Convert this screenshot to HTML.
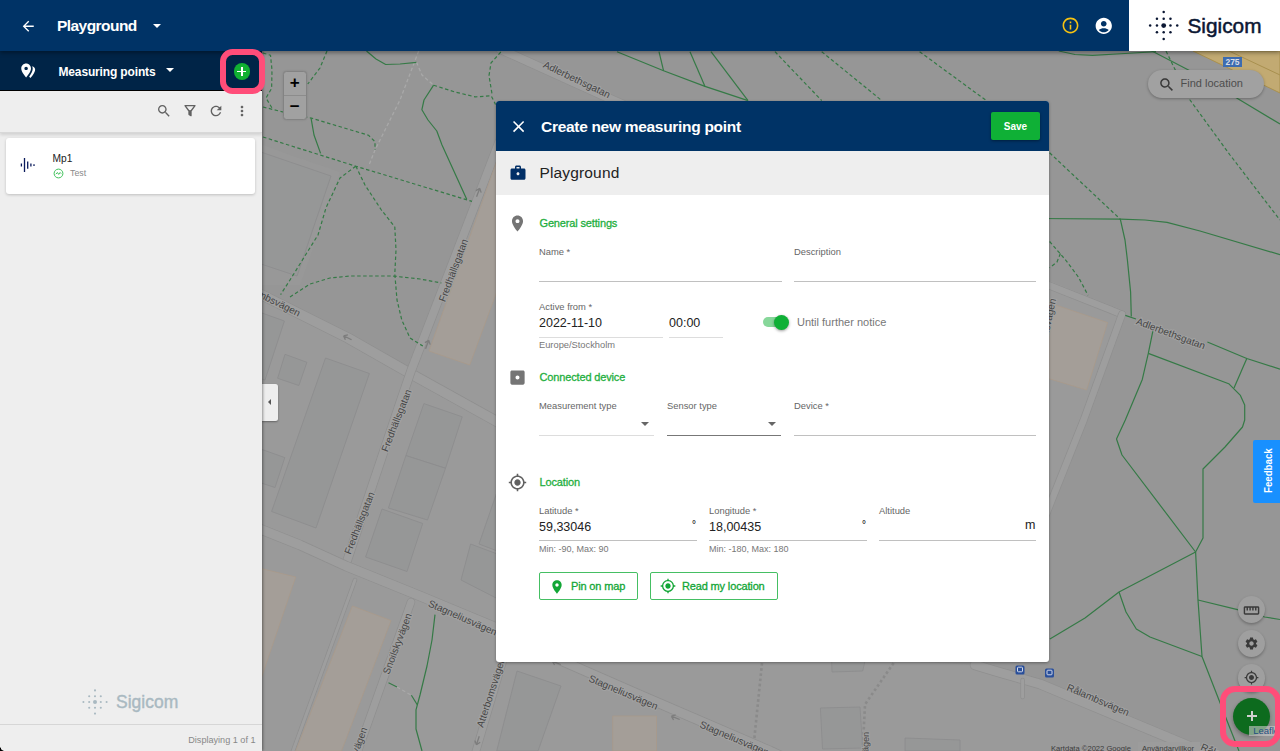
<!DOCTYPE html>
<html lang="en">
<head>
<meta charset="utf-8">
<title>Playground - Create new measuring point</title>
<style>
*{box-sizing:border-box;margin:0;padding:0}
html,body{width:1280px;height:751px;overflow:hidden;background:#999;font-family:"Liberation Sans",sans-serif;color:#222}
.abs{position:absolute}
.wcaret{position:absolute;width:0;height:0;border-left:4px solid transparent;border-right:4px solid transparent;border-top:4.500px solid #fff}
#map{position:absolute;left:0;top:0;width:1280px;height:751px}
#hdr{position:absolute;left:0;top:0;width:1280px;height:51px;background:#003366;box-shadow:0 2px 4px rgba(0,0,0,.35);z-index:5}
#hdr .title{position:absolute;left:57px;top:17.200px;font-size:15.500px;font-weight:bold;color:#fff;letter-spacing:-.55px}
#logo{position:absolute;left:1128.500px;top:0;width:151.500px;height:51px;background:#fff}
#logo .t{position:absolute;left:59px;top:13.500px;font-size:20.800px;color:#0b1733;-webkit-text-stroke:.5px #0b1733}
#side{position:absolute;left:0;top:50px;width:262px;height:701px;background:#eee;z-index:3;box-shadow:1px 0 2.500px rgba(0,0,0,.4)}
#sub{position:absolute;left:0;top:0;width:262px;height:41px;background:#002447;border-bottom:1px solid #000}
#sub .t{position:absolute;left:58.500px;top:15px;font-size:12px;font-weight:bold;color:#fff;letter-spacing:-.15px}
#tb{position:absolute;left:0;top:41px;width:262px;height:41.500px;background:#eee;border-bottom:1px solid #d8d8d8;box-shadow:0 2px 3px rgba(0,0,0,.12)}
#card{position:absolute;left:6px;top:87.500px;width:249px;height:56px;background:#fff;border-radius:3px;box-shadow:0 1px 3px rgba(0,0,0,.2)}
#card .n{position:absolute;left:46.500px;top:15.300px;font-size:10.200px;color:#222}
#card .s{position:absolute;left:64px;top:30.700px;font-size:8.800px;color:#8a8a8a}
#foot{position:absolute;left:0;top:674px;width:262px;height:27px;border-top:1px solid #d6d6d6}
#foot .t{position:absolute;right:6.500px;top:10px;font-size:9.100px;color:#888}
#slogo{position:absolute;left:116px;top:642px;font-size:17.500px;color:#a9b9c1;-webkit-text-stroke:.4px #a9b9c1}
#handle{position:absolute;left:262px;top:383.700px;width:16px;height:37.200px;background:#eee;border-radius:0 2.500px 2.500px 0;z-index:2;box-shadow:0 1px 2px rgba(0,0,0,.35)}
#dlg{position:absolute;left:496px;top:101px;width:553.200px;height:560.800px;background:#fff;border-radius:3px;box-shadow:0 1px 3px rgba(0,0,0,.35);z-index:4;overflow:hidden}
#dh{position:absolute;left:0;top:0;width:553px;height:50px;background:#003366}
#dh .t{position:absolute;left:45px;top:16.800px;letter-spacing:-.3px;font-size:15.500px;font-weight:bold;color:#fff}
#save{position:absolute;left:495.200px;top:10.800px;width:48.500px;height:28.200px;background:#0fb036;border-radius:2px;color:#fff;font-size:10px;font-weight:bold;text-align:center;line-height:29.500px;box-shadow:0 1px 3px rgba(0,0,0,.4)}
#pb{position:absolute;left:0;top:50px;width:553px;height:44px;background:#eee}
#pb .t{position:absolute;left:43.500px;top:12.800px;font-size:15.500px;color:#222;letter-spacing:.15px}
.sec{position:absolute;left:43.500px;font-size:11px;color:#1faf40;letter-spacing:-.15px;-webkit-text-stroke:.3px #1faf40}
.lbl{position:absolute;line-height:10px;font-size:9.400px;color:#666;white-space:nowrap}
.val{position:absolute;font-size:12.5px;color:#222}
.ul{position:absolute;height:1px;background:#c0c0c0}
.hint{position:absolute;font-size:9.300px;line-height:10px;color:#777;white-space:nowrap}
.ul.lt{background:#ddd}.ul.dk{background:#777}
.caret{position:absolute;width:0;height:0;border-left:4px solid transparent;border-right:4px solid transparent;border-top:4px solid #666}
.deg{font-size:10px;color:#444;font-weight:bold}
.btn{position:absolute;height:28px;border:1px solid #45bf63;border-radius:2px;color:#12a636;font-size:11px;line-height:26px;letter-spacing:-.15px;-webkit-text-stroke:.3px #12a636;white-space:nowrap}

#zoomc{position:absolute;left:282.500px;top:71px;width:24.500px;height:48.500px;background:#a1a1a1;border:1.500px solid #838383;border-radius:3.500px;z-index:1;box-shadow:0 0 2px rgba(0,0,0,.15)}
#zoomc .zb{position:absolute;left:0;width:22.500px;height:23px;text-align:center;font-size:17px;font-weight:bold;line-height:22px;color:#000}
#zoomc .zl{position:absolute;left:0;top:23px;width:22.500px;height:1px;background:#8c8c8c}
#find{position:absolute;left:1148px;top:70.300px;width:116px;height:27.400px;border-radius:14px;background:#a1a1a1;box-shadow:0 1px 3px rgba(0,0,0,.3);z-index:1}
#fb{position:absolute;left:1253.200px;top:439.500px;width:26.800px;height:63.300px;background:#1890ff;z-index:1;border-radius:2px 0 0 2px}
#fb span{position:absolute;left:7.500px;top:53.600px;transform-origin:0 0;transform:rotate(-90deg) scaleX(.835);color:#fff;font-size:11.600px;font-weight:bold;white-space:nowrap;line-height:14px}
.rb{position:absolute;left:1237.700px;width:27.400px;height:27.400px;border-radius:50%;background:#9f9f9f;box-shadow:0 1.500px 3px rgba(0,0,0,.28);z-index:1}
#fab{position:absolute;left:1233px;top:697.800px;width:37px;height:37px;border-radius:50%;background:#0d6b1e;box-shadow:0 2px 4px rgba(0,0,0,.3);z-index:1}
#leaf{position:absolute;left:1249.200px;top:725.800px;width:31px;height:10px;background:rgba(200,200,200,.62);z-index:2;overflow:hidden;font-size:9.500px;line-height:10px;color:#1f4f80;padding-left:4px;white-space:nowrap}
.pink{position:absolute;border:6.400px solid #ff4d79}
#addb{position:absolute;left:233.500px;top:63.200px;width:16.600px;height:16.600px;border-radius:50%;background:#10b032;z-index:9}
</style>
</head>
<body>
<div id="map"><!--MAP--><svg id="mapsvg" width="1280" height="751" viewBox="0 0 1280 751" style="position:absolute;left:0;top:0"><rect x="0" y="0" width="1280" height="751" fill="#969696"/>
<polygon points="250.0,288.5 348.0,338.0 411.8,374.3 520.0,434.0 520.0,640.0 975.0,665.0 1040.0,684.0 1230.0,764.0 250.0,764.0" fill="#9a9a9a" stroke="#9a9a9a" stroke-width="0"/>
<polygon points="500.0,140.0 411.8,374.3 520.0,434.0 520.0,140.0" fill="#9a9a9a" stroke="#9a9a9a" stroke-width="0"/>
<polygon points="1035.0,276.0 1049.6,281.0 1123.0,310.0 1126.0,314.0 1047.0,520.0 1035.0,540.0" fill="#9a9a9a" stroke="#9a9a9a" stroke-width="0"/>
<polygon points="250.0,140.0 290.0,155.0 340.0,172.0 300.0,285.0 250.0,285.0" fill="#989898" stroke="#989898" stroke-width="0"/>
<polygon points="1193.0,51.0 1280.0,93.0 1280.0,51.0" fill="#c2aa72" stroke="#a8904f" stroke-width="1"/>
<path d="M1229.0 51.0 L1280.0 75.0" fill="none" stroke="#a8904f" stroke-width="1" stroke-linejoin="round"/>
<rect x="1223" y="57" width="19" height="10" fill="#3d6cb0"/><text x="1232.500" y="65.300" font-size="8.500" font-weight="bold" fill="#d9dde6" text-anchor="middle" font-family="Liberation Sans, sans-serif">275</text>
<path d="M250.0 288.5 L262.0 295.0 L348.0 338.0 L411.8 374.3 L495.6 420.8 L520.0 434.0" fill="none" stroke="#8f8f8f" stroke-width="10.9" stroke-linejoin="round" stroke-linecap="round"/><path d="M250.0 288.5 L262.0 295.0 L348.0 338.0 L411.8 374.3 L495.6 420.8 L520.0 434.0" fill="none" stroke="#9e9e9e" stroke-width="9.5" stroke-linejoin="round" stroke-linecap="round"/>
<path d="M500.0 140.0 L475.0 205.0 L411.0 371.0 L401.0 400.0 L346.0 564.0" fill="none" stroke="#8f8f8f" stroke-width="9.4" stroke-linejoin="round" stroke-linecap="round"/><path d="M500.0 140.0 L475.0 205.0 L411.0 371.0 L401.0 400.0 L346.0 564.0" fill="none" stroke="#9e9e9e" stroke-width="8" stroke-linejoin="round" stroke-linecap="round"/>
<path d="M255.0 527.0 L300.0 545.0 L346.0 566.0 L420.0 596.0 L497.0 628.0 L560.0 660.0 L640.0 695.0 L770.0 751.0 L800.0 765.0" fill="none" stroke="#8f8f8f" stroke-width="10.4" stroke-linejoin="round" stroke-linecap="round"/><path d="M255.0 527.0 L300.0 545.0 L346.0 566.0 L420.0 596.0 L497.0 628.0 L560.0 660.0 L640.0 695.0 L770.0 751.0 L800.0 765.0" fill="none" stroke="#9e9e9e" stroke-width="9" stroke-linejoin="round" stroke-linecap="round"/>
<path d="M411.0 602.0 L358.0 751.0 L355.0 760.0" fill="none" stroke="#8f8f8f" stroke-width="8.4" stroke-linejoin="round" stroke-linecap="round"/><path d="M411.0 602.0 L358.0 751.0 L355.0 760.0" fill="none" stroke="#9e9e9e" stroke-width="7" stroke-linejoin="round" stroke-linecap="round"/>
<path d="M355.0 580.0 L293.0 751.0 L290.0 760.0" fill="none" stroke="#8f8f8f" stroke-width="4.4" stroke-linejoin="round" stroke-linecap="round"/><path d="M355.0 580.0 L293.0 751.0 L290.0 760.0" fill="none" stroke="#9e9e9e" stroke-width="3" stroke-linejoin="round" stroke-linecap="round"/>
<path d="M506.0 650.0 L476.0 751.0 L474.0 760.0" fill="none" stroke="#8f8f8f" stroke-width="8.4" stroke-linejoin="round" stroke-linecap="round"/><path d="M506.0 650.0 L476.0 751.0 L474.0 760.0" fill="none" stroke="#9e9e9e" stroke-width="7" stroke-linejoin="round" stroke-linecap="round"/>
<path d="M500.0 49.0 L615.0 101.0 L640.0 112.0" fill="none" stroke="#8f8f8f" stroke-width="9.4" stroke-linejoin="round" stroke-linecap="round"/><path d="M500.0 49.0 L615.0 101.0 L640.0 112.0" fill="none" stroke="#9e9e9e" stroke-width="8" stroke-linejoin="round" stroke-linecap="round"/>
<path d="M975.0 665.0 L1000.0 672.5 L1040.0 684.0 L1203.0 752.0 L1230.0 764.0" fill="none" stroke="#8f8f8f" stroke-width="10.4" stroke-linejoin="round" stroke-linecap="round"/><path d="M975.0 665.0 L1000.0 672.5 L1040.0 684.0 L1203.0 752.0 L1230.0 764.0" fill="none" stroke="#9e9e9e" stroke-width="9" stroke-linejoin="round" stroke-linecap="round"/>
<path d="M1022.6 680.0 L1022.6 697.0" fill="none" stroke="#8f8f8f" stroke-width="4.4" stroke-linejoin="round" stroke-linecap="round"/><path d="M1022.6 680.0 L1022.6 697.0" fill="none" stroke="#9e9e9e" stroke-width="3" stroke-linejoin="round" stroke-linecap="round"/>
<path d="M1035.0 280.0 L1049.6 285.6 L1110.0 309.5 L1122.0 314.4" fill="none" stroke="#8f8f8f" stroke-width="7.9" stroke-linejoin="round" stroke-linecap="round"/><path d="M1035.0 280.0 L1049.6 285.6 L1110.0 309.5 L1122.0 314.4" fill="none" stroke="#9e9e9e" stroke-width="6.5" stroke-linejoin="round" stroke-linecap="round"/>
<path d="M1122.0 314.4 L1083.7 420.0 L1047.0 512.0 L1038.0 535.0" fill="none" stroke="#8f8f8f" stroke-width="7.9" stroke-linejoin="round" stroke-linecap="round"/><path d="M1122.0 314.4 L1083.7 420.0 L1047.0 512.0 L1038.0 535.0" fill="none" stroke="#9e9e9e" stroke-width="6.5" stroke-linejoin="round" stroke-linecap="round"/>
<polygon points="255.0,150.0 290.0,162.0 331.0,176.0 297.0,276.0 255.0,262.0" fill="#969797" stroke="#8b8c8d" stroke-width="0.8"/>
<polygon points="325.5,358.0 369.4,373.5 316.0,528.0 271.6,511.5" fill="#969797" stroke="#8b8c8d" stroke-width="0.8"/>
<polygon points="255.0,447.0 284.8,457.6 275.0,487.5 255.0,481.0" fill="#969797" stroke="#8b8c8d" stroke-width="0.8"/>
<polygon points="423.9,403.6 462.2,416.8 445.5,468.3 405.9,455.6" fill="#969797" stroke="#8b8c8d" stroke-width="0.8"/>
<polygon points="405.9,455.6 445.5,468.3 427.5,520.0 388.4,508.0" fill="#969797" stroke="#8b8c8d" stroke-width="0.8"/>
<polygon points="382.0,509.0 422.7,523.5 407.0,571.5 365.6,557.0" fill="#969797" stroke="#8b8c8d" stroke-width="0.8"/>
<polygon points="497.0,492.0 479.0,544.0 500.0,552.0 500.0,492.0" fill="#969797" stroke="#8b8c8d" stroke-width="0.8"/>
<polygon points="470.6,544.0 500.0,555.0 500.0,600.0 461.0,580.0" fill="#969797" stroke="#8b8c8d" stroke-width="0.8"/>
<polygon points="517.0,671.0 561.0,686.0 538.0,751.0 496.7,751.0" fill="#969797" stroke="#8b8c8d" stroke-width="0.8"/>
<polygon points="831.7,661.0 865.0,661.0 862.7,671.0 832.0,672.0" fill="#969797" stroke="#8b8c8d" stroke-width="0.8"/>
<polygon points="820.4,708.0 860.0,707.0 862.7,748.0 822.5,749.0" fill="#969797" stroke="#8b8c8d" stroke-width="0.8"/>
<polygon points="285.0,354.3 306.9,362.3 298.9,385.5 277.6,378.3" fill="#969797" stroke="#8b8c8d" stroke-width="0.8"/>
<polygon points="255.0,310.5 284.4,321.0 265.0,380.0 255.0,377.0" fill="#969797" stroke="#8b8c8d" stroke-width="0.8"/>
<polygon points="905.0,738.0 960.0,740.0 960.0,751.0 905.0,751.0" fill="#969797" stroke="#8b8c8d" stroke-width="0.8"/>
<polygon points="255.0,567.0 295.7,577.0 262.0,676.0 255.0,690.0" fill="#a49e98" stroke="#ab9a88" stroke-width="0.7"/>
<polygon points="352.4,606.0 391.0,620.6 341.5,751.0 295.7,751.0" fill="#a49e98" stroke="#ab9a88" stroke-width="0.7"/>
<polygon points="612.7,716.0 656.5,716.0 656.5,751.0 612.7,751.0" fill="#a49e98" stroke="#ab9a88" stroke-width="0.7"/>
<polygon points="500.0,152.0 429.0,351.0 469.7,365.0 500.0,283.0" fill="#a49e98" stroke="#ab9a88" stroke-width="0.7"/>
<polygon points="1058.6,306.0 1107.6,322.6 1086.6,390.0 1040.0,376.0 1040.0,300.0" fill="#a49e98" stroke="#ab9a88" stroke-width="0.7"/>
<path d="M762.0 663.0 L754.4 738.0" fill="none" stroke="#8a8a8a" stroke-width="2.6" stroke-dasharray="2.6 2.6" stroke-linejoin="round" stroke-linecap="butt"/>
<path d="M893.6 663.0 L865.0 704.4 L862.7 751.0" fill="none" stroke="#8a8a8a" stroke-width="2.6" stroke-dasharray="2.6 2.6" stroke-linejoin="round" stroke-linecap="butt"/>
<path d="M263.0 53.0 L270.5 55.3 L272.0 70.0 L271.6 88.4 L266.0 98.0 L272.0 108.0" fill="none" stroke="#357a46" stroke-width="1.2" stroke-dasharray="3.5 2.5" stroke-linejoin="round"/>
<path d="M327.0 51.0 L320.0 68.0 L307.8 84.0" fill="none" stroke="#357a46" stroke-width="1.2" stroke-dasharray="3.5 2.5" stroke-linejoin="round"/>
<path d="M263.0 107.0 L283.0 112.0 L311.0 118.0 L368.6 135.3 L375.0 141.7 L375.0 150.0" fill="none" stroke="#357a46" stroke-width="1.2" stroke-dasharray="3.5 2.5" stroke-linejoin="round"/>
<path d="M418.7 51.0 L400.0 100.0 L375.0 150.0 L368.6 166.2" fill="none" stroke="#a9a9a9" stroke-width="1.3" stroke-dasharray="3.5 2.5" stroke-linejoin="round"/>
<path d="M263.0 137.0 L355.8 166.2 L472.0 201.4" fill="none" stroke="#357a46" stroke-width="1.2" stroke-dasharray="3.5 2.5" stroke-linejoin="round"/>
<path d="M311.0 117.8 L314.0 135.0 L320.6 153.4" fill="none" stroke="#357a46" stroke-width="1.2" stroke-linejoin="round"/>
<path d="M366.5 51.0 L376.0 59.0 L385.7 64.5 L400.0 64.0 L416.6 62.4" fill="none" stroke="#357a46" stroke-width="1.2" stroke-linejoin="round"/>
<path d="M416.6 62.4 L422.0 75.0 L433.6 85.2" fill="none" stroke="#a9a9a9" stroke-width="1.3" stroke-dasharray="3.5 2.5" stroke-linejoin="round"/>
<path d="M433.6 85.2 L455.0 92.0 L475.2 96.9 L491.2 95.8 L495.5 104.4" fill="none" stroke="#357a46" stroke-width="1.2" stroke-dasharray="3.5 2.5" stroke-linejoin="round"/>
<path d="M433.6 85.2 L424.0 100.0 L421.9 109.7 L428.0 120.0 L436.8 131.0 L442.0 145.0 L466.7 199.3" fill="none" stroke="#357a46" stroke-width="1.2" stroke-linejoin="round"/>
<path d="M500.8 52.0 L491.0 63.0 L489.0 75.6 L492.3 95.8" fill="none" stroke="#357a46" stroke-width="1.2" stroke-dasharray="3.5 2.5" stroke-linejoin="round"/>
<path d="M355.8 166.2 L340.0 178.0 L326.0 207.8 L318.0 235.0 L308.6 250.0 L290.0 280.0 L280.6 294.6" fill="none" stroke="#357a46" stroke-width="1.2" stroke-dasharray="3.5 2.5" stroke-linejoin="round"/>
<path d="M355.8 166.2 L365.0 185.0 L381.4 210.0 L394.8 227.0 L396.0 250.0 L394.8 273.7 L397.0 300.0 L401.8 320.0 L410.0 338.0 L422.8 346.0" fill="none" stroke="#357a46" stroke-width="1.2" stroke-dasharray="3.5 2.5" stroke-linejoin="round"/>
<path d="M290.0 297.0 L310.0 284.0 L330.0 278.0 L350.5 276.0 L392.5 276.0 L420.0 279.0 L441.4 283.0" fill="none" stroke="#357a46" stroke-width="1.2" stroke-dasharray="3.5 2.5" stroke-linejoin="round"/>
<path d="M435.0 614.6 L432.0 640.0 L427.0 666.0 L420.0 695.0 L416.0 709.8 L416.0 729.0 L422.0 751.0" fill="none" stroke="#357a46" stroke-width="1.2" stroke-linejoin="round"/>
<path d="M388.5 682.8 L397.0 687.0" fill="none" stroke="#357a46" stroke-width="1.2" stroke-linejoin="round"/>
<path d="M397.0 687.0 L411.4 695.3" fill="none" stroke="#a9a9a9" stroke-width="1.3" stroke-dasharray="3.5 2.5" stroke-linejoin="round"/>
<path d="M411.4 695.3 L417.4 705.0" fill="none" stroke="#357a46" stroke-width="1.2" stroke-linejoin="round"/>
<path d="M617.0 51.7 L663.6 70.8 L705.0 86.4 L748.0 100.6" fill="none" stroke="#357a46" stroke-width="1.2" stroke-linejoin="round"/>
<path d="M659.0 51.7 L663.6 70.8" fill="none" stroke="#357a46" stroke-width="1.2" stroke-linejoin="round"/>
<path d="M690.0 51.7 L705.0 86.4" fill="none" stroke="#357a46" stroke-width="1.2" stroke-linejoin="round"/>
<path d="M711.0 51.7 L748.0 100.6" fill="none" stroke="#357a46" stroke-width="1.2" stroke-linejoin="round"/>
<path d="M775.0 51.7 L821.7 100.6" fill="none" stroke="#357a46" stroke-width="1.2" stroke-dasharray="3.5 2.5" stroke-linejoin="round"/>
<path d="M821.7 51.7 L881.8 100.6" fill="none" stroke="#357a46" stroke-width="1.2" stroke-dasharray="3.5 2.5" stroke-linejoin="round"/>
<path d="M919.6 51.7 L986.4 100.6" fill="none" stroke="#357a46" stroke-width="1.2" stroke-dasharray="3.5 2.5" stroke-linejoin="round"/>
<path d="M1049.6 152.8 L1120.3 219.2" fill="none" stroke="#357a46" stroke-width="1.2" stroke-dasharray="3.5 2.5" stroke-linejoin="round"/>
<path d="M1040.0 218.5 L1120.3 219.2 L1145.0 220.0 L1167.0 222.3 L1200.0 231.0 L1280.0 254.7" fill="none" stroke="#357a46" stroke-width="1.2" stroke-linejoin="round"/>
<path d="M1120.3 219.2 L1125.0 240.0 L1127.4 260.0 L1130.6 292.0 L1131.3 316.5" fill="none" stroke="#357a46" stroke-width="1.2" stroke-linejoin="round"/>
<path d="M1166.0 51.0 L1190.0 100.0 L1230.0 155.0 L1280.0 220.0" fill="none" stroke="#357a46" stroke-width="1.2" stroke-dasharray="3.5 2.5" stroke-linejoin="round"/>
<path d="M1058.8 51.0 L1075.0 54.5 L1092.5 55.3 L1125.0 53.5 L1156.0 51.6" fill="none" stroke="#357a46" stroke-width="1.2" stroke-linejoin="round"/>
<path d="M1150.0 50.0 L1200.0 76.0 L1240.0 100.0 L1280.0 124.0" fill="none" stroke="#357a46" stroke-width="1.2" stroke-linejoin="round"/>
<path d="M1049.6 241.5 L1065.6 260.0 L1078.4 277.0 L1088.0 295.2" fill="none" stroke="#357a46" stroke-width="1.2" stroke-dasharray="3.5 2.5" stroke-linejoin="round"/>
<path d="M1060.4 253.5 L1057.0 262.0 L1049.6 267.8" fill="none" stroke="#357a46" stroke-width="1.2" stroke-dasharray="3.5 2.5" stroke-linejoin="round"/>
<path d="M1207.4 342.0 L1246.8 358.5 L1280.0 369.2" fill="none" stroke="#357a46" stroke-width="1.2" stroke-linejoin="round"/>
<path d="M1125.3 315.4 L1136.0 319.0" fill="none" stroke="#357a46" stroke-width="1.2" stroke-linejoin="round"/>
<path d="M1153.0 330.4 L1148.3 353.4 L1142.3 379.4 L1125.3 420.1 L1116.5 439.0 L1122.0 455.0 L1195.6 552.0" fill="none" stroke="#357a46" stroke-width="1.2" stroke-linejoin="round"/>
<path d="M1148.3 353.4 L1228.7 383.7 L1240.4 395.4 L1244.7 405.0 L1244.7 420.0 L1242.5 427.0 L1225.0 447.0 L1203.0 469.0 L1203.0 538.0 L1195.6 552.0" fill="none" stroke="#357a46" stroke-width="1.2" stroke-linejoin="round"/>
<path d="M1246.8 358.5 L1234.0 388.0" fill="none" stroke="#357a46" stroke-width="1.2" stroke-linejoin="round"/>
<path d="M1195.6 552.0 L1198.0 600.0 L1202.0 656.5" fill="none" stroke="#357a46" stroke-width="1.2" stroke-linejoin="round"/>
<path d="M1195.6 552.0 L1119.0 592.0 L1085.0 618.0 L1049.9 639.0" fill="none" stroke="#357a46" stroke-width="1.2" stroke-linejoin="round"/>
<path d="M1119.0 592.0 L1126.0 612.0 L1136.3 629.0 L1150.0 637.0 L1202.0 656.5" fill="none" stroke="#357a46" stroke-width="1.2" stroke-linejoin="round"/>
<path d="M1198.0 600.0 L1237.5 609.6 L1264.7 617.0 L1280.0 619.5" fill="none" stroke="#357a46" stroke-width="1.2" stroke-linejoin="round"/>
<path d="M1202.0 656.5 L1229.0 725.7 L1239.0 751.0" fill="none" stroke="#357a46" stroke-width="1.2" stroke-linejoin="round"/>
<text x="542.5" y="67" transform="rotate(25.5 542.5 67)" font-size="10" fill="#454545" font-family="Liberation Sans, sans-serif" stroke="#a2a2a2" stroke-width="2" paint-order="stroke" style="paint-order:stroke">Adlerbethsgatan</text>
<text x="1135.5" y="324" transform="rotate(20.5 1135.5 324)" font-size="10" fill="#454545" font-family="Liberation Sans, sans-serif" stroke="#a2a2a2" stroke-width="2" paint-order="stroke" style="paint-order:stroke">Adlerbethsgatan</text>
<text x="445" y="302.5" transform="rotate(-69.5 445 302.5)" font-size="10" fill="#454545" font-family="Liberation Sans, sans-serif" stroke="#a2a2a2" stroke-width="2" paint-order="stroke" style="paint-order:stroke">Fredhällsgatan</text>
<text x="387.5" y="452.5" transform="rotate(-68.5 387.5 452.5)" font-size="10" fill="#454545" font-family="Liberation Sans, sans-serif" stroke="#a2a2a2" stroke-width="2" paint-order="stroke" style="paint-order:stroke">Fredhällsgatan</text>
<text x="350.5" y="555" transform="rotate(-68.5 350.5 555)" font-size="10" fill="#454545" font-family="Liberation Sans, sans-serif" stroke="#a2a2a2" stroke-width="2" paint-order="stroke" style="paint-order:stroke">Fredhällsgatan</text>
<text x="238.5" y="287" transform="rotate(26.5 238.5 287)" font-size="10" fill="#454545" font-family="Liberation Sans, sans-serif" stroke="#a2a2a2" stroke-width="2" paint-order="stroke" style="paint-order:stroke">Rålambsvägen</text>
<text x="427.5" y="606" transform="rotate(23.7 427.5 606)" font-size="10" fill="#454545" font-family="Liberation Sans, sans-serif" stroke="#a2a2a2" stroke-width="2" paint-order="stroke" style="paint-order:stroke">Stagneliusvägen</text>
<text x="588" y="681" transform="rotate(23 588 681)" font-size="10" fill="#454545" font-family="Liberation Sans, sans-serif" stroke="#a2a2a2" stroke-width="2" paint-order="stroke" style="paint-order:stroke">Stagneliusvägen</text>
<text x="699" y="727" transform="rotate(23 699 727)" font-size="10" fill="#454545" font-family="Liberation Sans, sans-serif" stroke="#a2a2a2" stroke-width="2" paint-order="stroke" style="paint-order:stroke">Stagneliusvägen</text>
<text x="389" y="675" transform="rotate(-69 389 675)" font-size="10" fill="#454545" font-family="Liberation Sans, sans-serif" stroke="#a2a2a2" stroke-width="2" paint-order="stroke" style="paint-order:stroke">Snoilskyvägen</text>
<text x="344.5" y="789" transform="rotate(-69 344.5 789)" font-size="10" fill="#454545" font-family="Liberation Sans, sans-serif" stroke="#a2a2a2" stroke-width="2" paint-order="stroke" style="paint-order:stroke">Snoilskyvägen</text>
<text x="483" y="728" transform="rotate(-72 483 728)" font-size="10" fill="#454545" font-family="Liberation Sans, sans-serif" stroke="#a2a2a2" stroke-width="2" paint-order="stroke" style="paint-order:stroke">Atterbomsvägen</text>
<text x="1066" y="690" transform="rotate(23 1066 690)" font-size="10" fill="#454545" font-family="Liberation Sans, sans-serif" stroke="#a2a2a2" stroke-width="2" paint-order="stroke" style="paint-order:stroke">Rålambsvägen</text>
<text x="1200" y="749.5" transform="rotate(23 1200 749.5)" font-size="10" fill="#454545" font-family="Liberation Sans, sans-serif" stroke="#a2a2a2" stroke-width="2" paint-order="stroke" style="paint-order:stroke">Rålambsvägen</text>
<text x="1041" y="370.5" transform="rotate(-78 1041 370.5)" font-size="10" fill="#454545" font-family="Liberation Sans, sans-serif" stroke="#a2a2a2" stroke-width="2" paint-order="stroke" style="paint-order:stroke">Atterbomsvägen</text>
<text x="867" y="790" transform="rotate(-88 867 790)" font-size="9" fill="#454545" font-family="Liberation Sans, sans-serif" stroke="#a2a2a2" stroke-width="2" paint-order="stroke" style="paint-order:stroke">Snoilskyvägen</text>
<path transform="translate(348 338) rotate(26.5)" d="M-5 0H4M-5 0l3.500 -2.800M-5 0l3.500 2.800" stroke="#7d7d7d" stroke-width="1.300" fill="none"/>
<path transform="translate(478 193) rotate(111)" d="M-5 0H4M-5 0l3.500 -2.800M-5 0l3.500 2.800" stroke="#7d7d7d" stroke-width="1.300" fill="none"/>
<path transform="translate(427 345) rotate(111)" d="M-5 0H4M-5 0l3.500 -2.800M-5 0l3.500 2.800" stroke="#7d7d7d" stroke-width="1.300" fill="none"/>
<path transform="translate(478 740) rotate(-72)" d="M-5 0H4M-5 0l3.500 -2.800M-5 0l3.500 2.800" stroke="#7d7d7d" stroke-width="1.300" fill="none"/>
<path transform="translate(557 663) rotate(22)" d="M-5 0H4M-5 0l3.500 -2.800M-5 0l3.500 2.800" stroke="#7d7d7d" stroke-width="1.300" fill="none"/>
<path transform="translate(676 718) rotate(22)" d="M-5 0H4M-5 0l3.500 -2.800M-5 0l3.500 2.800" stroke="#7d7d7d" stroke-width="1.300" fill="none"/>
<rect x="1015.5" y="665.5" width="9" height="9" rx="1.500" fill="#2a4f9a"/><rect x="1017.5" y="667.2" width="5" height="4.600" rx=".8" fill="none" stroke="#cfd6e6" stroke-width="1"/>
<rect x="1045.0" y="668.5" width="9" height="9" rx="1.500" fill="#2a4f9a"/><rect x="1047.0" y="670.2" width="5" height="4.600" rx=".8" fill="none" stroke="#cfd6e6" stroke-width="1"/>
<text x="1051" y="750.500" font-size="7.600" fill="#3c3c3c" font-family="Liberation Sans, sans-serif">Kartdata ©2022 Google</text>
<rect x="1138" y="742" width="62" height="9" fill="#9c9c9c"/><text x="1142" y="750.500" font-size="7.600" fill="#3c3c3c" font-family="Liberation Sans, sans-serif">Användarvillkor</text></svg><!--/MAP--></div>
<div id="hdr">
  <svg class="abs" style="left:20.250px;top:18.350px" width="16.500" height="16.500" viewBox="0 0 24 24"><path fill="#fff" d="M20 11H7.830l5.590-5.590L12 4l-8 8 8 8 1.410-1.410L7.830 13H20v-2z"/></svg>
  <div class="title" id="t_title">Playground</div>
  <div class="wcaret" style="left:152.500px;top:24px"></div>
  <svg class="abs" style="left:1060.500px;top:16px" width="19" height="19" viewBox="0 0 24 24"><path fill="#f5c211" d="M11 7h2v2h-2zm0 4h2v6h-2zm1-9C6.480 2 2 6.480 2 12s4.480 10 10 10 10-4.480 10-10S17.520 2 12 2zm0 18c-4.410 0-8-3.590-8-8s3.590-8 8-8 8 3.590 8 8-3.590 8-8 8z"/></svg>
  <svg class="abs" style="left:1094px;top:16px" width="19.500" height="19.500" viewBox="0 0 24 24"><path fill="#fff" d="M12 2C6.480 2 2 6.480 2 12s4.480 10 10 10 10-4.480 10-10S17.520 2 12 2zm0 4c1.930 0 3.500 1.570 3.500 3.500S13.930 13 12 13s-3.500-1.570-3.500-3.500S10.070 6 12 6zm0 14c-2.030 0-4.430-.82-6.140-2.880C7.550 15.800 9.680 15 12 15s4.450.8 6.140 2.120C16.430 19.180 14.030 20 12 20z"/></svg>
  <div id="logo"><svg class="abs" style="left:0;top:0" width="151" height="50"><circle cx="34.70" cy="12.08" r="1.25" fill="#0b1733"/><circle cx="27.94" cy="18.84" r="1.25" fill="#0b1733"/><circle cx="34.70" cy="18.84" r="1.25" fill="#0b1733"/><circle cx="41.46" cy="18.84" r="1.25" fill="#0b1733"/><circle cx="21.18" cy="25.60" r="1.25" fill="#0b1733"/><circle cx="27.94" cy="25.60" r="1.25" fill="#0b1733"/><circle cx="41.46" cy="25.60" r="1.25" fill="#0b1733"/><circle cx="48.22" cy="25.60" r="1.25" fill="#0b1733"/><circle cx="27.94" cy="32.36" r="1.25" fill="#0b1733"/><circle cx="34.70" cy="32.36" r="1.25" fill="#0b1733"/><circle cx="41.46" cy="32.36" r="1.25" fill="#0b1733"/><circle cx="34.70" cy="39.12" r="1.25" fill="#0b1733"/><circle cx="34.7" cy="25.6" r="2.4" fill="#0b1733"/></svg><div class="t" id="t_logo">Sigicom</div></div>
</div>
<div id="side">
  <div id="sub">
    <svg class="abs" style="left:19px;top:12px" width="18" height="18" viewBox="0 0 24 24"><path fill="#fff" d="M9.500 2C5.910 2 3 4.910 3 8.500 3 13.380 9.500 20.500 9.500 20.500S16 13.380 16 8.500C16 4.910 13.090 2 9.500 2zm0 8.800c-1.270 0-2.300-1.030-2.300-2.300s1.030-2.300 2.300-2.300 2.300 1.030 2.300 2.300-1.030 2.300-2.300 2.300z"/><path fill="#fff" d="M17.500 5.600c.5 1 .8 2.100.8 3.300 0 3.400-2.500 7.600-4.800 10.600l1.900 1.700s6.100-6.300 6.100-11.200c0-2-1.600-3.800-4-4.400z"/></svg>
    <div class="t" id="t_mp">Measuring points</div>
    <div class="wcaret" style="left:166px;top:18px"></div>
    <div class="abs" style="left:240px;top:20px;width:1px;height:1px"></div>
  </div>
  <div id="tb">
    <svg class="abs" style="left:155.500px;top:11.500px" width="16" height="16" viewBox="0 0 24 24"><path fill="#616161" d="M15.500 14h-.79l-.28-.27C15.410 12.590 16 11.110 16 9.500 16 5.910 13.090 3 9.500 3S3 5.910 3 9.500 5.910 16 9.500 16c1.610 0 3.090-.59 4.230-1.570l.27.28v.79l5 4.990L20.490 19l-4.990-5zm-6 0C7.010 14 5 11.990 5 9.500S7.010 5 9.500 5 14 7.010 14 9.500 11.990 14 9.500 14z"/></svg>
    <svg class="abs" style="left:182px;top:12px" width="16" height="16" viewBox="0 0 24 24"><path fill="none" stroke="#616161" stroke-width="2" stroke-linejoin="round" d="M4.500 4h15l-6 8v7l-3-2v-5z"/><path fill="#616161" d="M10.500 11h3v8l-3-2z"/></svg>
    <svg class="abs" style="left:207.500px;top:11.500px" width="16" height="16" viewBox="0 0 24 24"><path fill="#616161" d="M17.650 6.350C16.200 4.900 14.210 4 12 4c-4.420 0-7.990 3.580-7.990 8s3.570 8 7.990 8c3.730 0 6.840-2.550 7.730-6h-2.080c-.82 2.330-3.040 4-5.650 4-3.310 0-6-2.690-6-6s2.690-6 6-6c1.660 0 3.140.69 4.220 1.780L13 11h7V4l-2.350 2.350z"/></svg>
    <svg class="abs" style="left:233.500px;top:12px" width="16" height="16" viewBox="0 0 24 24"><path fill="#616161" d="M12 8c1.100 0 2-.9 2-2s-.9-2-2-2-2 .9-2 2 .9 2 2 2zm0 2c-1.100 0-2 .9-2 2s.9 2 2 2 2-.9 2-2-.9-2-2-2zm0 6c-1.100 0-2 .9-2 2s.9 2 2 2 2-.9 2-2-.9-2-2-2z"/></svg>
  </div>
  <div id="card">
    <svg class="abs" style="left:12px;top:18px" width="20" height="18" viewBox="0 0 20 18"><g stroke="#0a1a5c" stroke-width="1.300" fill="none"><path d="M3.400 7.500v3M6.500 2v14M9.700 5.500v7.200M12.900 7.600v3M16 8.200v1.800"/></g></svg>
    <div class="n" id="t_mp1">Mp1</div>
    <svg class="abs" style="left:46.500px;top:30.500px" width="11" height="11" viewBox="0 0 11 11"><circle cx="5.500" cy="5.500" r="4.400" fill="none" stroke="#3fc25a" stroke-width="1"/><path d="M2.800 6.200l1.600-1.700 1.300 1.900 1.400-1.900 1.100 1.200" fill="none" stroke="#3fc25a" stroke-width="1"/></svg>
    <div class="s" id="t_test">Test</div></div>
  <svg class="abs" style="left:75px;top:632px" width="40" height="40"><circle cx="20.00" cy="8.40" r="1.05" fill="#a9b9c1"/><circle cx="14.20" cy="14.20" r="1.05" fill="#a9b9c1"/><circle cx="20.00" cy="14.20" r="1.05" fill="#a9b9c1"/><circle cx="25.80" cy="14.20" r="1.05" fill="#a9b9c1"/><circle cx="8.40" cy="20.00" r="1.05" fill="#a9b9c1"/><circle cx="14.20" cy="20.00" r="1.05" fill="#a9b9c1"/><circle cx="25.80" cy="20.00" r="1.05" fill="#a9b9c1"/><circle cx="31.60" cy="20.00" r="1.05" fill="#a9b9c1"/><circle cx="14.20" cy="25.80" r="1.05" fill="#a9b9c1"/><circle cx="20.00" cy="25.80" r="1.05" fill="#a9b9c1"/><circle cx="25.80" cy="25.80" r="1.05" fill="#a9b9c1"/><circle cx="20.00" cy="31.60" r="1.05" fill="#a9b9c1"/><circle cx="20" cy="20" r="2.0" fill="#a9b9c1"/></svg>
  <div id="slogo"><span id="t_slogo">Sigicom</span></div>
  <div id="foot"><div class="t" id="t_disp">Displaying 1 of 1</div></div>
</div>
<div id="handle"><div class="abs" style="left:5.800px;top:15.800px;width:0;height:0;border-top:3px solid transparent;border-bottom:3px solid transparent;border-right:3.800px solid #555"></div></div>
<!--OV-->
<div id="zoomc"><div class="zb" style="top:0">+</div><div class="zl"></div><div class="zb" style="top:24px">−</div></div>
<div id="find"><svg class="abs" style="left:9.500px;top:5.500px" width="17.500" height="17.500" viewBox="0 0 24 24"><path fill="#3a3a3a" d="M15.500 14h-.79l-.28-.27C15.410 12.590 16 11.110 16 9.500 16 5.910 13.090 3 9.500 3S3 5.910 3 9.500 5.910 16 9.500 16c1.610 0 3.090-.59 4.230-1.570l.27.28v.79l5 4.990L20.490 19l-4.990-5zm-6 0C7.010 14 5 11.990 5 9.500S7.010 5 9.500 5 14 7.010 14 9.500 11.990 14 9.500 14z"/></svg><span class="abs" style="left:32.500px;top:7px;font-size:11px;color:#4d4d4d;white-space:nowrap" id="t_find">Find location</span></div>
<div id="fb"><span id="t_fb">Feedback</span></div>
<div class="rb" style="top:595.900px"><svg class="abs" style="left:5.200px;top:6px" width="17" height="17" viewBox="0 0 24 24"><path fill="#3a3a3a" d="M21 6H3c-1.100 0-2 .9-2 2v8c0 1.100.9 2 2 2h18c1.100 0 2-.9 2-2V8c0-1.100-.9-2-2-2zm0 10H3V8h2v4h2V8h2v4h2V8h2v4h2V8h2v4h2V8h2v8z"/></svg></div>
<div class="rb" style="top:629.900px"><svg class="abs" style="left:6.200px;top:6.200px" width="15" height="15" viewBox="0 0 24 24"><path fill="#3a3a3a" d="M19.140 12.940c.04-.3.060-.61.060-.94 0-.32-.02-.64-.07-.94l2.030-1.580c.18-.14.230-.41.120-.61l-1.920-3.320c-.12-.22-.37-.29-.59-.22l-2.390.96c-.5-.38-1.030-.7-1.620-.94l-.36-2.540c-.04-.24-.24-.41-.48-.41h-3.840c-.24 0-.43.170-.47.410l-.36 2.540c-.59.240-1.130.57-1.620.94l-2.390-.96c-.22-.08-.47 0-.59.220L2.740 8.870c-.12.210-.08.470.12.610l2.030 1.580c-.05.300-.09.630-.09.940s.02.640.07.940l-2.030 1.580c-.18.140-.23.410-.12.610l1.920 3.320c.12.220.37.290.59.220l2.390-.96c.5.380 1.030.7 1.620.94l.36 2.540c.05.240.24.410.48.410h3.840c.24 0 .44-.17.470-.41l.36-2.540c.59-.24 1.130-.56 1.620-.94l2.390.96c.22.080.47 0 .59-.22l1.920-3.320c.12-.22.070-.47-.12-.61l-2.010-1.580zM12 15.600c-1.980 0-3.600-1.620-3.600-3.600s1.620-3.600 3.600-3.600 3.600 1.620 3.600 3.600-1.620 3.600-3.600 3.600z"/></svg></div>
<div class="rb" style="top:664.200px"><svg class="abs" style="left:6.200px;top:6.200px" width="15" height="15" viewBox="0 0 24 24"><path fill="#3a3a3a" d="M12 8c-2.210 0-4 1.790-4 4s1.790 4 4 4 4-1.790 4-4-1.790-4-4-4zm8.940 3c-.46-4.170-3.770-7.480-7.940-7.940V1h-2v2.060C6.830 3.520 3.520 6.830 3.060 11H1v2h2.060c.46 4.170 3.770 7.480 7.940 7.940V23h2v-2.060c4.170-.46 7.480-3.770 7.940-7.940H23v-2h-2.060zM12 19c-3.870 0-7-3.130-7-7s3.130-7 7-7 7 3.130 7 7-3.130 7-7 7z"/></svg></div>
<div id="fab"><div class="abs" style="left:13.500px;top:17.500px;width:10px;height:2px;background:#cfcfcf"></div><div class="abs" style="left:17.500px;top:13.500px;width:2px;height:10px;background:#cfcfcf"></div></div>
<div id="leaf"><span id="t_leaf">Leaflet</span></div>
<div class="pink" style="left:1219.700px;top:685.900px;width:61px;height:61.200px;border-radius:15px;z-index:9"></div>
<div class="pink" style="left:220.300px;top:48.800px;width:45.200px;height:45.200px;border-radius:12.500px;z-index:9"></div>
<div id="addb"><div class="abs" style="left:3.800px;top:7.500px;width:9px;height:1.600px;background:#fff"></div><div class="abs" style="left:7.500px;top:3.800px;width:1.600px;height:9px;background:#fff"></div></div>
<div class="abs" style="left:0;top:746px;width:4px;height:5px;z-index:20;background:radial-gradient(ellipse 4px 5px at 100% 0,rgba(0,0,0,0) 88%,#000 100%)"></div>
<!--/OV-->
<div id="dlg">
  <div id="dh">
    <svg class="abs" style="left:12.800px;top:15.700px" width="19.200" height="19.200" viewBox="0 0 24 24"><path fill="#fff" d="M19 6.41L17.59 5 12 10.59 6.41 5 5 6.410 10.59 12 5 17.59 6.41 19 12 13.41 17.59 19 19 17.59 13.41 12z"/></svg>
    <div class="t" id="t_dlgtitle">Create new measuring point</div><div id="save"><span id="t_save">Save</span></div></div>
  <div id="pb">
    <svg class="abs" style="left:12.500px;top:12.500px" width="18" height="18" viewBox="0 0 24 24"><path fill="#002e66" d="M20 6h-4V4c0-1.11-.89-2-2-2h-4c-1.110 0-2 .89-2 2v2H4c-1.110 0-1.990.89-1.990 2L2 19c0 1.110.89 2 2 2h16c1.110 0 2-.89 2-2V8c0-1.110-.89-2-2-2zm-8 9c-1.100 0-2-.9-2-2s.9-2 2-2 2 .9 2 2-.9 2-2 2zm2-9h-4V4h4v2z"/></svg>
    <div class="t" id="t_proj">Playground</div></div>

  <svg class="abs" style="left:12px;top:113px" width="19" height="19" viewBox="0 0 24 24"><path fill="#757575" d="M12 2C8.130 2 5 5.130 5 9c0 5.250 7 13 7 13s7-7.750 7-13c0-3.870-3.130-7-7-7zm0 9.500c-1.380 0-2.500-1.120-2.500-2.500s1.120-2.500 2.500-2.500 2.500 1.120 2.500 2.500-1.120 2.500-2.500 2.500z"/></svg>
  <div class="sec" style="top:116px" id="t_gs">General settings</div>
  <div class="lbl" style="left:43px;top:146px" id="t_name">Name *</div>
  <div class="ul" style="left:43px;top:180px;width:243px"></div>
  <div class="lbl" style="left:298px;top:146px" id="t_desc">Description</div>
  <div class="ul" style="left:298px;top:180px;width:242px"></div>

  <div class="lbl" style="left:43px;top:201px" id="t_af">Active from *</div>
  <div class="val" style="left:43px;top:215px" id="t_date">2022-11-10</div>
  <div class="ul lt" style="left:43px;top:236px;width:124px"></div>
  <div class="val" style="left:173px;top:215px" id="t_time">00:00</div>
  <div class="ul lt" style="left:173px;top:236px;width:54px"></div>
  <div class="hint" style="left:43px;top:239px" id="t_tz">Europe/Stockholm</div>
  <div class="abs" style="left:267px;top:216px;width:24px;height:10px;border-radius:5px;background:#87d79a"></div>
  <div class="abs" style="left:278px;top:213.500px;width:15px;height:15px;border-radius:50%;background:#0fb036;box-shadow:0 1px 3px rgba(0,0,0,.4)"></div>
  <div class="abs" style="left:301px;top:215px;font-size:11px;color:#777" id="t_ufn">Until further notice</div>

  <svg class="abs" style="left:12px;top:267px" width="19" height="19" viewBox="0 0 24 24"><path fill="#757575" d="M3 5v14c0 1.100.9 2 2 2h14c1.100 0 2-.9 2-2V5c0-1.100-.9-2-2-2H5c-1.100 0-2 .9-2 2zm9 9.500c-1.380 0-2.500-1.120-2.500-2.500s1.120-2.500 2.500-2.500 2.500 1.120 2.500 2.500-1.120 2.500-2.500 2.500z"/></svg>
  <div class="sec" style="top:270px" id="t_cd">Connected device</div>
  <div class="lbl" style="left:43px;top:300px" id="t_mt">Measurement type</div>
  <div class="ul lt" style="left:43px;top:334px;width:115px"></div>
  <div class="caret" style="left:145px;top:321px"></div>
  <div class="lbl" style="left:171px;top:300px" id="t_st">Sensor type</div>
  <div class="ul dk" style="left:171px;top:334px;width:114px"></div>
  <div class="caret" style="left:272px;top:321px"></div>
  <div class="lbl" style="left:298px;top:300px" id="t_dev">Device *</div>
  <div class="ul" style="left:298px;top:334px;width:242px"></div>

  <svg class="abs" style="left:12px;top:371.500px" width="19" height="19" viewBox="0 0 24 24"><path fill="#616161" d="M12 8c-2.210 0-4 1.790-4 4s1.790 4 4 4 4-1.790 4-4-1.790-4-4-4zm8.940 3c-.46-4.170-3.770-7.480-7.940-7.940V1h-2v2.060C6.830 3.520 3.520 6.830 3.060 11H1v2h2.060c.46 4.170 3.770 7.480 7.940 7.940V23h2v-2.060c4.170-.46 7.480-3.770 7.940-7.940H23v-2h-2.060zM12 19c-3.870 0-7-3.130-7-7s3.130-7 7-7 7 3.130 7 7-3.130 7-7 7z"/></svg>
  <div class="sec" style="top:375px" id="t_loc">Location</div>
  <div class="lbl" style="left:43px;top:405px" id="t_lat">Latitude *</div>
  <div class="val" style="left:43px;top:419px" id="t_latv">59,33046</div>
  <div class="abs deg" style="left:196px;top:418px">°</div>
  <div class="ul" style="left:43px;top:439px;width:158px"></div>
  <div class="hint" style="left:43px;top:443px;font-size:9px" id="t_lath">Min: -90, Max: 90</div>
  <div class="lbl" style="left:213px;top:405px" id="t_lon">Longitude *</div>
  <div class="val" style="left:213px;top:419px" id="t_lonv">18,00435</div>
  <div class="abs deg" style="left:366px;top:418px">°</div>
  <div class="ul" style="left:213px;top:439px;width:158px"></div>
  <div class="hint" style="left:213px;top:443px;font-size:9px" id="t_lonh">Min: -180, Max: 180</div>
  <div class="lbl" style="left:383px;top:405px" id="t_alt">Altitude</div>
  <div class="val" style="left:529px;top:417px" id="t_m">m</div>
  <div class="ul" style="left:383px;top:439px;width:157px"></div>

  <div class="btn" style="left:43px;top:471px;width:99px">
    <svg class="abs" style="left:9px;top:6px" width="16" height="16" viewBox="0 0 24 24"><path fill="#12a636" d="M12 2C8.130 2 5 5.130 5 9c0 5.250 7 13 7 13s7-7.750 7-13c0-3.870-3.130-7-7-7zm0 9.500c-1.380 0-2.500-1.120-2.500-2.500s1.120-2.500 2.500-2.500 2.500 1.120 2.500 2.500-1.120 2.500-2.500 2.500z"/></svg>
    <span class="abs" style="left:31px;top:0" id="t_pin">Pin on map</span></div>
  <div class="btn" style="left:154px;top:471px;width:128px">
    <svg class="abs" style="left:9px;top:5px" width="16" height="16" viewBox="0 0 24 24"><path fill="#12a636" d="M12 8c-2.210 0-4 1.790-4 4s1.790 4 4 4 4-1.790 4-4-1.790-4-4-4zm8.940 3c-.46-4.170-3.770-7.480-7.940-7.940V1h-2v2.060C6.830 3.520 3.520 6.830 3.060 11H1v2h2.060c.46 4.170 3.770 7.480 7.940 7.940V23h2v-2.060c4.170-.46 7.480-3.770 7.940-7.940H23v-2h-2.060zM12 19c-3.870 0-7-3.130-7-7s3.130-7 7-7 7 3.130 7 7-3.130 7-7 7z"/></svg>
    <span class="abs" style="left:31px;top:0" id="t_read">Read my location</span></div>
</div>
</body>
</html>
